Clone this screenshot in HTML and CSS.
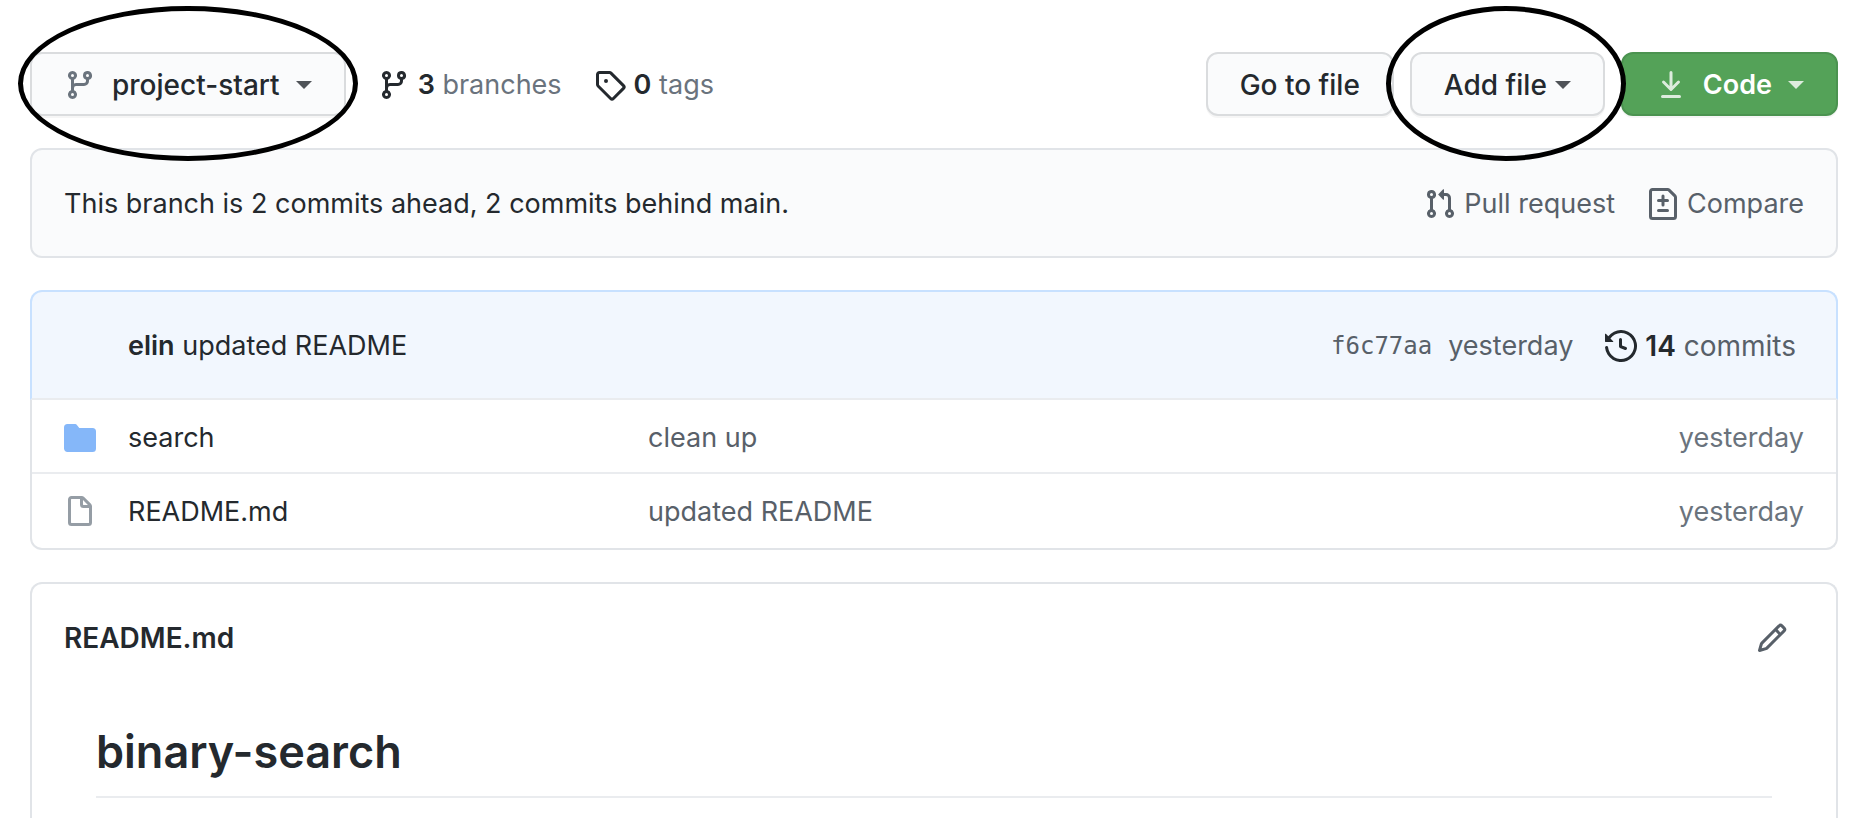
FILE: index.html
```html
<!DOCTYPE html>
<html lang="en">
<head>
<meta charset="utf-8">
<title>binary-search</title>
<link rel="stylesheet" href="styles.css">
</head>
<body>
<svg class="sprite" aria-hidden="true">
  <symbol id="i-branch" viewBox="0 0 16 16"><path fill-rule="evenodd" d="M11.75 2.5a.75.75 0 100 1.5.75.75 0 000-1.5zm-2.25.75a2.25 2.25 0 113 2.122V6A2.5 2.5 0 0110 8.5H6a1 1 0 00-1 1v1.128a2.251 2.251 0 11-1.5 0V5.372a2.25 2.25 0 111.5 0v1.836A2.492 2.492 0 016 7h4a1 1 0 001-1v-.628A2.25 2.25 0 019.5 3.25zM4.25 12a.75.75 0 100 1.5.75.75 0 000-1.5zM3.5 3.25a.75.75 0 111.5 0 .75.75 0 01-1.5 0z"/></symbol>
  <symbol id="i-tag" viewBox="0 0 16 16"><path fill-rule="evenodd" d="M2.5 7.775V2.75a.25.25 0 01.25-.25h5.025a.25.25 0 01.177.073l6.25 6.25a.25.25 0 010 .354l-5.025 5.025a.25.25 0 01-.354 0l-6.25-6.25a.25.25 0 01-.073-.177zm-1.5 0V2.75C1 1.784 1.784 1 2.75 1h5.025c.464 0 .91.184 1.238.513l6.25 6.25a1.75 1.75 0 010 2.474l-5.026 5.026a1.75 1.75 0 01-2.474 0l-6.25-6.25A1.75 1.75 0 011 7.775zM6 5a1 1 0 100 2 1 1 0 000-2z"/></symbol>
  <symbol id="i-download" viewBox="0 0 16 16"><path fill-rule="evenodd" d="M7.47 10.78a.75.75 0 001.06 0l3.75-3.75a.75.75 0 00-1.06-1.06L8.75 8.44V1.75a.75.75 0 00-1.5 0v6.69L4.78 5.97a.75.75 0 00-1.06 1.06l3.75 3.75zM3.75 13a.75.75 0 000 1.5h8.5a.75.75 0 000-1.5h-8.5z"/></symbol>
  <symbol id="i-pull" viewBox="0 0 16 16"><path fill-rule="evenodd" d="M7.177 3.073L9.573.677A.25.25 0 0110 .854v4.792a.25.25 0 01-.427.177L7.177 3.427a.25.25 0 010-.354zM3.75 2.5a.75.75 0 100 1.5.75.75 0 000-1.5zm-2.25.75a2.25 2.25 0 113 2.122v5.256a2.251 2.251 0 11-1.5 0V5.372A2.25 2.25 0 011.5 3.25zM11 2.5h-1V4h1a1 1 0 011 1v5.628a2.251 2.251 0 101.5 0V5A2.5 2.5 0 0011 2.5zm1 10.25a.75.75 0 111.5 0 .75.75 0 01-1.5 0zM3.75 12a.75.75 0 100 1.5.75.75 0 000-1.5z"/></symbol>
  <symbol id="i-diff" viewBox="0 0 16 16"><path fill-rule="evenodd" d="M2.75 1.5a.25.25 0 00-.25.25v12.5c0 .138.112.25.25.25h10.5a.25.25 0 00.25-.25V4.664a.25.25 0 00-.073-.177l-2.914-2.914a.25.25 0 00-.177-.073H2.75zM1 1.75C1 .784 1.784 0 2.75 0h7.586c.464 0 .909.184 1.237.513l2.914 2.914c.329.328.513.773.513 1.237v9.586A1.75 1.75 0 0113.25 16H2.75A1.75 1.75 0 011 14.25V1.75zm7 1.5a.75.75 0 01.75.75v1.5h1.5a.75.75 0 010 1.5h-1.5v1.5a.75.75 0 01-1.5 0V7h-1.5a.75.75 0 010-1.5h1.5V4A.75.75 0 018 3.25zm-3 8a.75.75 0 01.75-.75h4.5a.75.75 0 010 1.5h-4.5a.75.75 0 01-.75-.75z"/></symbol>
  <symbol id="i-history" viewBox="0 0 16 16"><path fill-rule="evenodd" d="M1.643 3.143L.427 1.927A.25.25 0 000 2.104V5.75c0 .138.112.25.25.25h3.646a.25.25 0 00.177-.427L2.715 4.215a6.5 6.5 0 11-1.18 4.458.75.75 0 10-1.493.154 8.001 8.001 0 101.6-5.684zM7.75 4a.75.75 0 01.75.75v2.992l2.028.812a.75.75 0 01-.557 1.392l-2.5-1A.75.75 0 017 8.25v-3.5A.75.75 0 017.75 4z"/></symbol>
  <symbol id="i-folder" viewBox="0 0 16 16"><path fill-rule="evenodd" d="M1.75 1A1.75 1.75 0 000 2.75v10.5C0 14.216.784 15 1.75 15h12.5A1.75 1.75 0 0016 13.25v-8.5A1.75 1.75 0 0014.25 3h-6.5a.25.25 0 01-.2-.1l-.9-1.2c-.33-.44-.85-.7-1.4-.7h-3.5z"/></symbol>
  <symbol id="i-file" viewBox="0 0 16 16"><path fill-rule="evenodd" d="M3.75 1.5a.25.25 0 00-.25.25v11.5c0 .138.112.25.25.25h8.5a.25.25 0 00.25-.25V6H9.75A1.75 1.75 0 018 4.25V1.5H3.75zm5.75.56v2.19c0 .138.112.25.25.25h2.19L9.5 2.06zM2 1.75C2 .784 2.784 0 3.75 0h5.086c.464 0 .909.184 1.237.513l3.414 3.414c.329.328.513.773.513 1.237v8.086A1.75 1.75 0 0112.25 15h-8.5A1.75 1.75 0 012 13.25V1.75z"/></symbol>
  <symbol id="i-pencil" viewBox="0 0 16 16"><path fill-rule="evenodd" d="M11.013 1.427a1.75 1.75 0 012.474 0l1.086 1.086a1.75 1.75 0 010 2.474l-8.61 8.61c-.21.21-.47.364-.756.445l-3.251.93a.75.75 0 01-.927-.928l.929-3.25a1.75 1.75 0 01.445-.758l8.61-8.61zm1.414 1.06a.25.25 0 00-.354 0L10.811 3.75l1.439 1.44 1.263-1.263a.25.25 0 000-.354l-1.086-1.086zM11.189 6.25L9.75 4.81l-6.286 6.287a.25.25 0 00-.064.108l-.558 1.953 1.953-.558a.249.249 0 00.108-.064l6.286-6.286z"/></symbol>
</svg>

<main class="page">
  <nav class="toolbar">
    <div class="marked marked-branch">
      <button class="btn branch-btn" type="button">
        <svg class="icon"><use href="#i-branch"/></svg>
        <span>project-start</span>
        <span class="caret"></span>
      </button>
    </div>
    <a class="stat" href="#branches"><svg class="icon"><use href="#i-branch"/></svg><span><strong>3</strong> branches</span></a>
    <a class="stat" href="#tags"><svg class="icon"><use href="#i-tag"/></svg><span><strong>0</strong> tags</span></a>
    <div class="actions">
      <a class="btn" href="#find">Go to file</a>
      <div class="marked marked-add">
        <button class="btn add-btn" type="button">Add file <span class="caret"></span></button>
      </div>
      <button class="btn btn-primary" type="button">
        <svg class="icon"><use href="#i-download"/></svg>
        <span>Code</span>
        <span class="caret"></span>
      </button>
    </div>
  </nav>

  <section class="compare">
    <span>This branch is 2 commits ahead, 2 commits behind main.</span>
    <div class="compare-links">
      <a href="#pull"><svg class="icon"><use href="#i-pull"/></svg>Pull request</a>
      <a href="#compare"><svg class="icon"><use href="#i-diff"/></svg>Compare</a>
    </div>
  </section>

  <section class="files">
    <header class="commit">
      <div><a class="author" href="#elin">elin</a> <a href="#commit">updated README</a></div>
      <div class="commit-meta">
        <a class="sha" href="#commit">f6c77aa</a>
        <span>yesterday</span>
        <a class="commits" href="#commits"><svg class="icon"><use href="#i-history"/></svg><span><strong>14</strong> commits</span></a>
      </div>
    </header>
    <table class="file-table">
      <colgroup><col class="col-icon"><col class="col-name"><col><col class="col-age"></colgroup>
      <tbody>
        <tr>
          <td><svg class="icon folder"><use href="#i-folder"/></svg></td>
          <td><a href="#search">search</a></td>
          <td class="msg"><a href="#commit">clean up</a></td>
          <td class="age">yesterday</td>
        </tr>
        <tr>
          <td><svg class="icon file"><use href="#i-file"/></svg></td>
          <td><a href="#readme">README.md</a></td>
          <td class="msg"><a href="#commit">updated README</a></td>
          <td class="age">yesterday</td>
        </tr>
      </tbody>
    </table>
  </section>

  <section class="readme" id="readme">
    <header class="readme-head">
      <h2>README.md</h2>
      <button class="edit" type="button" aria-label="Edit this file"><svg class="icon"><use href="#i-pencil"/></svg></button>
    </header>
    <article class="readme-body">
      <h1>binary-search</h1>
    </article>
  </section>
</main>
</body>
</html>
```
FILE: styles.css
```css
* { box-sizing: border-box; }

html { overflow: hidden; }

body {
  margin: 0;
  background: #fff;
  color: #24292e;
  font: 27px/42px Inter, "Liberation Sans", sans-serif;
}

a { color: inherit; text-decoration: none; }

strong { font-weight: 600; color: #24292e; }

.sprite { display: none; }

.icon {
  display: block;
  flex: none;
  width: 32px;
  height: 32px;
  fill: currentColor;
}

.page {
  height: 100vh;
  padding: 52px 26px 0 30px;
  display: flex;
  flex-direction: column;
  gap: 32px;
}

/* Toolbar */
.toolbar {
  display: flex;
  align-items: center;
  gap: 32px;
}

.btn {
  display: flex;
  align-items: center;
  height: 64px;
  padding: 2px 32px 0;
  border: 2px solid #dadcde;
  border-radius: 12px;
  background: #fafbfc;
  box-shadow: 0 2px 0 rgba(27, 31, 35, 0.04);
  color: #24292e;
  font: inherit;
  font-size: 28px;
  font-weight: 500;
  white-space: nowrap;
}

.caret {
  width: 16px;
  border: 8px solid transparent;
  border-top-color: currentColor;
  border-bottom: 0;
  opacity: 0.8;
}

.branch-btn { gap: 16px; }
.branch-btn .icon { color: #6a737d; }

.add-btn { gap: 8px; }

.btn-primary {
  gap: 16px;
  border-color: #4b9350;
  background: #54a258;
  color: #fff;
  font-size: 27px;
  font-weight: 600;
}
.btn-primary .icon { opacity: 0.8; }

.stat {
  display: flex;
  align-items: center;
  gap: 8px;
  padding-top: 2px;
  color: #6a737d;
}
.stat .icon { color: #24292e; }

.actions {
  display: flex;
  gap: 16px;
  margin-left: auto;
}

/* Hand-drawn style rings around two of the buttons */
.marked { position: relative; }
.marked::after {
  content: "";
  position: absolute;
  z-index: 1;
  inset: -46px -12px -45px;
  border: 5px solid #000;
  border-radius: 50%;
  pointer-events: none;
}
.marked-add::after { inset: -46px -21px -45px -24px; }

/* Branch comparison bar */
.compare {
  display: flex;
  justify-content: space-between;
  align-items: center;
  padding: 33px 32px 31px;
  border: 2px solid #e1e4e8;
  border-radius: 12px;
  background: #fafbfc;
}
.compare-links {
  display: flex;
  gap: 32px;
  color: #586069;
}
.compare-links a {
  display: flex;
  align-items: center;
  gap: 8px;
}

/* File list */
.commit {
  display: flex;
  justify-content: space-between;
  align-items: center;
  padding: 33px 40px 31px 96px;
  border: 2px solid #c8e1ff;
  border-bottom-color: #eaecef;
  border-radius: 12px 12px 0 0;
  background: #f2f7fe;
}
.author { font-weight: 600; }
.commit-meta {
  display: flex;
  align-items: center;
  gap: 16px;
  color: #586069;
}
.sha { font: 24px/42px "DejaVu Sans Mono", monospace; }
.commits {
  display: flex;
  align-items: center;
  gap: 8px;
  margin-left: 16px;
  font-size: 28px;
}
.commits .icon { color: #24292e; }

.file-table {
  width: 100%;
  table-layout: fixed;
  border: 2px solid #e1e4e8;
  border-top: 0;
  border-radius: 0 0 12px 12px;
  border-collapse: separate;
  border-spacing: 0;
}
.file-table td { padding: 17px 0 13px; }
.file-table td:first-child { padding-left: 32px; }
.file-table td:last-child { padding-right: 32px; }
.file-table tr + tr td {
  padding-bottom: 15px;
  border-top: 2px solid #eaecef;
}
.col-icon { width: 96px; }
.col-name { width: 520px; }
.col-age { width: 240px; }
.folder { color: #85b7f9; }
.file { color: #959da5; }
.msg { color: #586069; }
.age { color: #6a737d; text-align: right; }

/* Readme */
.readme {
  flex: 1 0 auto;
  border: 2px solid #e1e4e8;
  border-bottom: 0;
  border-radius: 12px 12px 0 0;
}
.readme-head {
  display: flex;
  justify-content: space-between;
  align-items: center;
  padding: 33px 48px 31px 32px;
}
.readme-head h2 {
  margin: 0;
  font-size: 28px;
  font-weight: 600;
}
.edit {
  padding: 0;
  border: 0;
  background: none;
  color: #586069;
}
.readme-body { padding: 32px 64px 0; }
.readme-body h1 {
  margin: 0;
  padding-bottom: 14px;
  border-bottom: 2px solid #eaecef;
  font-size: 45px;
  line-height: 60px;
  font-weight: 600;
}
```
